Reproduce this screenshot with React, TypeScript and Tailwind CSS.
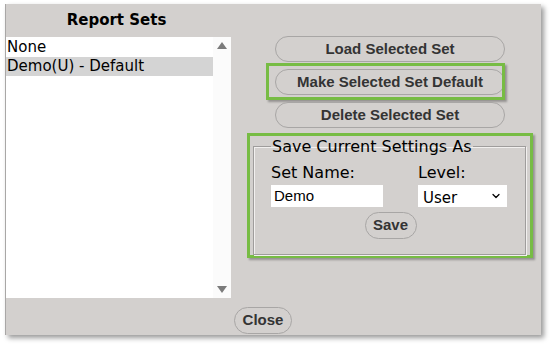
import { ChevronDown } from "lucide-react";

const SETS = [
  { name: "None", selected: false },
  { name: "Demo(U) - Default", selected: true },
];

const ACTIONS = ["Load Selected Set", "Make Selected Set Default", "Delete Selected Set"];

const verdana = "font-['DejaVu_Sans',Verdana,sans-serif]";
const arial = "font-['Liberation_Sans',Arial,sans-serif]";

function PillButton({ label, className = "" }: { label: string; className?: string }) {
  return (
    <button
      className={`flex items-center justify-center rounded-full border border-[#a8a6a5] bg-[#d3d0ce] text-[15px] font-bold text-[#343434] ${arial} ${className}`}
    >
      {label}
    </button>
  );
}

export default function App() {
  return (
    <div className="min-h-screen bg-white pl-[5px] pt-[4px]">
      <div className="flex h-[331px] w-[536px] flex-col border-l border-[#a9a7a6] bg-[#d3d0ce] shadow-[3px_3px_5px_rgba(0,0,0,0.4)]">
        <div className="flex">
          {/* report sets list */}
          <div className="w-[225px]">
            <div className={`flex h-[33px] items-center justify-center pr-[4px] text-[15px] font-bold text-black ${verdana}`}>
              Report Sets
            </div>
            <div className="relative flex h-[261px] bg-white">
              <div className="flex-1 pt-[1px]">
                {SETS.map((s) => (
                  <div
                    key={s.name}
                    className={`h-[19px] pl-[1px] text-[15px] leading-[19px] text-black ${verdana} ${s.selected ? "bg-[#d4d4d4]" : ""}`}
                  >
                    {s.name}
                  </div>
                ))}
              </div>
              <div className="flex w-[18px] flex-col items-center justify-between bg-[#fbfbfb] py-[5px]">
                <svg width="10" height="7" viewBox="0 0 10 7">
                  <polygon points="5,0 10,7 0,7" fill="#7b7b7b" />
                </svg>
                <svg width="10" height="7" viewBox="0 0 10 7">
                  <polygon points="0,0 10,0 5,7" fill="#7b7b7b" />
                </svg>
              </div>
            </div>
          </div>

          {/* actions */}
          <div className="flex flex-1 flex-col pt-[32px]">
            <div className="ml-[44px] flex w-[230px] flex-col gap-[7px]">
              {ACTIONS.map((a, i) => (
                <div key={a} className="relative">
                  <PillButton label={a} className="h-[26px] w-full" />
                  {i === 1 && (
                    <div className="pointer-events-none absolute -left-[9px] -top-[6px] h-[37px] w-[239px] border-[3px] border-[#77bc44] shadow-[2px_2px_2px_rgba(0,0,0,0.3)]" />
                  )}
                </div>
              ))}
            </div>

            <div className="ml-[16px] mt-[5px] h-[125px] w-[286px] border-[3px] border-[#77bc44] pl-[3px] pr-[4px] pt-[1px] shadow-[2px_2px_2px_rgba(0,0,0,0.3)]">
              <fieldset className="h-[118px] border border-[#9f9d9c] px-[17px] shadow-[inset_1px_1px_0_#f2f0ef,1px_1px_0_#f2f0ef]">
                <legend className={`px-[1px] text-[16px] leading-[19px] text-black ${verdana}`}>
                  Save Current Settings As
                </legend>
                <div className="grid grid-cols-[112px_89px] gap-x-[35px] pt-[7px]">
                  <div className={`text-[16px] leading-[20px] text-black ${verdana}`}>Set Name:</div>
                  <div className={`text-[16px] leading-[20px] text-black ${verdana}`}>Level:</div>
                  <input
                    defaultValue="Demo"
                    className={`mt-[2px] h-[22px] bg-white px-[3px] text-[15px] text-black outline-none ${arial}`}
                  />
                  <div className="relative mt-[2px] h-[22px] bg-white">
                    <select
                      defaultValue="User"
                      className={`h-full w-full appearance-none bg-transparent pl-[5px] text-[15px] text-black outline-none ${verdana}`}
                    >
                      <option>User</option>
                    </select>
                    <ChevronDown
                      className="pointer-events-none absolute right-[5px] top-[5px] h-[12px] w-[12px] text-black"
                      strokeWidth={2.5}
                    />
                  </div>
                </div>
                <div className="mt-[5px] flex justify-center pl-[2px]">
                  <PillButton label="Save" className="h-[27px] w-[52px]" />
                </div>
              </fieldset>
            </div>
          </div>
        </div>

        <div className="ml-[228px] mt-[9px]">
          <PillButton label="Close" className="h-[27px] w-[58px]" />
        </div>
      </div>
    </div>
  );
}
